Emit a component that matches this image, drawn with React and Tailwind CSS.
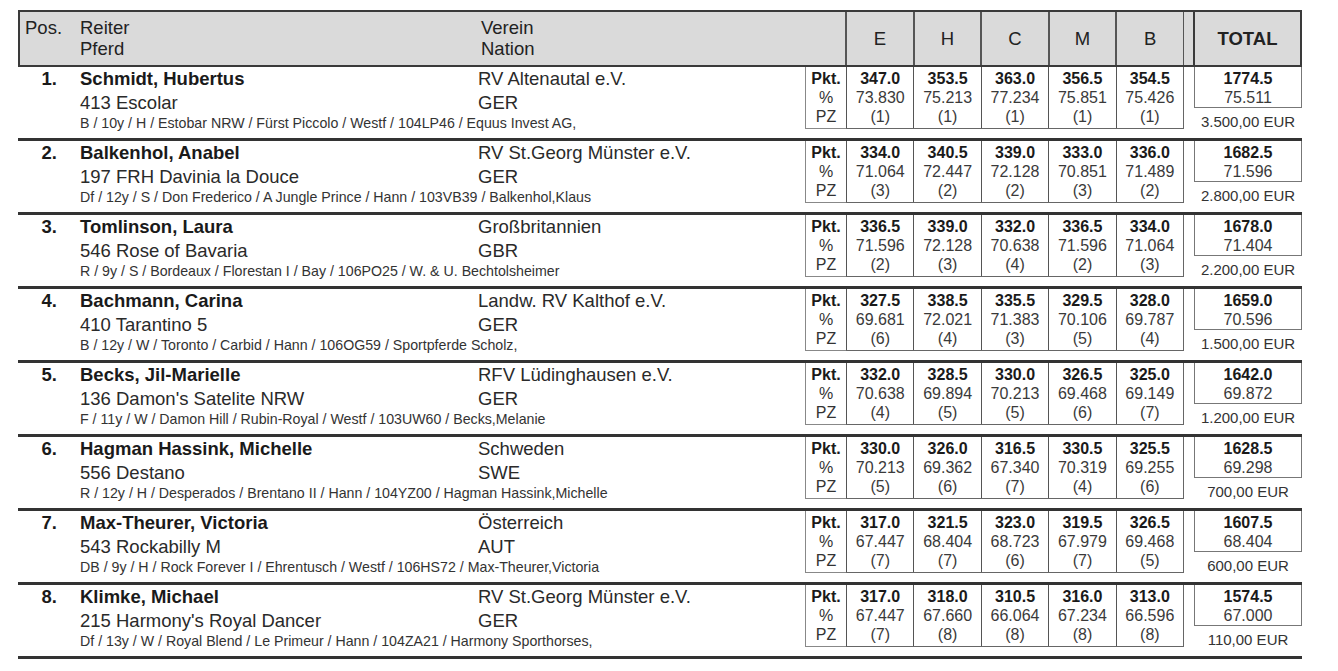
const results = [
  {
    pos: '1.', rider: 'Schmidt, Hubertus', horse: '413 Escolar', club: 'RV Altenautal e.V.', nation: 'GER',
    info: 'B / 10y / H / Estobar NRW / Fürst Piccolo / Westf / 104LP46 / Equus Invest AG,',
    scores: [['347.0', '73.830', '1'], ['353.5', '75.213', '1'], ['363.0', '77.234', '1'], ['356.5', '75.851', '1'], ['354.5', '75.426', '1']],
    total: '1774.5', percent: '75.511', prize: '3.500,00 EUR',
  },
  {
    pos: '2.', rider: 'Balkenhol, Anabel', horse: '197 FRH Davinia la Douce', club: 'RV St.Georg Münster e.V.', nation: 'GER',
    info: 'Df / 12y / S / Don Frederico / A Jungle Prince / Hann / 103VB39 / Balkenhol,Klaus',
    scores: [['334.0', '71.064', '3'], ['340.5', '72.447', '2'], ['339.0', '72.128', '2'], ['333.0', '70.851', '3'], ['336.0', '71.489', '2']],
    total: '1682.5', percent: '71.596', prize: '2.800,00 EUR',
  },
  {
    pos: '3.', rider: 'Tomlinson, Laura', horse: '546 Rose of Bavaria', club: 'Großbritannien', nation: 'GBR',
    info: 'R / 9y / S / Bordeaux / Florestan I / Bay / 106PO25 / W. & U. Bechtolsheimer',
    scores: [['336.5', '71.596', '2'], ['339.0', '72.128', '3'], ['332.0', '70.638', '4'], ['336.5', '71.596', '2'], ['334.0', '71.064', '3']],
    total: '1678.0', percent: '71.404', prize: '2.200,00 EUR',
  },
  {
    pos: '4.', rider: 'Bachmann, Carina', horse: '410 Tarantino 5', club: 'Landw. RV Kalthof e.V.', nation: 'GER',
    info: 'B / 12y / W / Toronto / Carbid / Hann / 106OG59 / Sportpferde Scholz,',
    scores: [['327.5', '69.681', '6'], ['338.5', '72.021', '4'], ['335.5', '71.383', '3'], ['329.5', '70.106', '5'], ['328.0', '69.787', '4']],
    total: '1659.0', percent: '70.596', prize: '1.500,00 EUR',
  },
  {
    pos: '5.', rider: 'Becks, Jil-Marielle', horse: "136 Damon's Satelite NRW", club: 'RFV Lüdinghausen e.V.', nation: 'GER',
    info: 'F / 11y / W / Damon Hill / Rubin-Royal / Westf / 103UW60 / Becks,Melanie',
    scores: [['332.0', '70.638', '4'], ['328.5', '69.894', '5'], ['330.0', '70.213', '5'], ['326.5', '69.468', '6'], ['325.0', '69.149', '7']],
    total: '1642.0', percent: '69.872', prize: '1.200,00 EUR',
  },
  {
    pos: '6.', rider: 'Hagman Hassink, Michelle', horse: '556 Destano', club: 'Schweden', nation: 'SWE',
    info: 'R / 12y / H / Desperados / Brentano II / Hann / 104YZ00 / Hagman Hassink,Michelle',
    scores: [['330.0', '70.213', '5'], ['326.0', '69.362', '6'], ['316.5', '67.340', '7'], ['330.5', '70.319', '4'], ['325.5', '69.255', '6']],
    total: '1628.5', percent: '69.298', prize: '700,00 EUR',
  },
  {
    pos: '7.', rider: 'Max-Theurer, Victoria', horse: '543 Rockabilly M', club: 'Österreich', nation: 'AUT',
    info: 'DB / 9y / H / Rock Forever I / Ehrentusch / Westf / 106HS72 / Max-Theurer,Victoria',
    scores: [['317.0', '67.447', '7'], ['321.5', '68.404', '7'], ['323.0', '68.723', '6'], ['319.5', '67.979', '7'], ['326.5', '69.468', '5']],
    total: '1607.5', percent: '68.404', prize: '600,00 EUR',
  },
  {
    pos: '8.', rider: 'Klimke, Michael', horse: "215 Harmony's Royal Dancer", club: 'RV St.Georg Münster e.V.', nation: 'GER',
    info: 'Df / 13y / W / Royal Blend / Le Primeur / Hann / 104ZA21 / Harmony Sporthorses,',
    scores: [['317.0', '67.447', '7'], ['318.0', '67.660', '8'], ['310.5', '66.064', '8'], ['316.0', '67.234', '8'], ['313.0', '66.596', '8']],
    total: '1574.5', percent: '67.000', prize: '110,00 EUR',
  },
]

const judges = ['E', 'H', 'C', 'M', 'B']

const Header = () => (
  <div className="flex h-[57px] border-2 border-[#3a3a3a] bg-[#dadada] text-[18.5px] text-[#222]">
    <div className="flex w-[825px] pt-[5px] leading-[21px]">
      <div className="w-[60px] pl-[5px]">Pos.</div>
      <div className="w-[398px]">
        <div>Reiter</div>
        <div>Pferd</div>
      </div>
      <div className="pl-[3px]">
        <div>Verein</div>
        <div>Nation</div>
      </div>
    </div>
    <div className="flex w-[338px]">
      {judges.map((j) => (
        <div key={j} className="flex flex-1 items-center justify-center border-l-2 border-[#555]">
          {j}
        </div>
      ))}
    </div>
    <div className="w-[10px] border-l border-[#555]" />
    <div className="flex flex-1 items-center justify-center border-l-2 border-[#3a3a3a] font-bold">
      TOTAL
    </div>
  </div>
)

const ResultRow = ({ r }) => (
  <div className="flex h-[74px] border-b-[3px] border-[#333]">
    <div className="w-[62px] pr-[23px] text-right text-[18.5px] font-bold leading-[24px] text-[#1a1a1a]">
      {r.pos}
    </div>
    <div className="w-[725px] text-[18.5px] leading-[24px] text-[#2a2a2a]">
      <div className="flex">
        <div className="w-[398px] font-bold text-[#1a1a1a]">{r.rider}</div>
        <div>{r.club}</div>
      </div>
      <div className="flex">
        <div className="w-[398px]">{r.horse}</div>
        <div>{r.nation}</div>
      </div>
      <div className="whitespace-nowrap text-[14.2px] leading-[16px] text-[#333]">{r.info}</div>
    </div>
    <div className="h-[62px] w-[41px] border-b border-l border-[#888] pt-[2px] text-center text-[16px] leading-[19px] text-[#333]">
      <div className="font-bold text-[#1a1a1a]">Pkt.</div>
      <div>%</div>
      <div>PZ</div>
    </div>
    <div className="flex h-[62px] w-[338px] border-r border-b border-[#666]">
      {r.scores.map((s, i) => (
        <div key={i} className="flex-1 border-l-[1.5px] border-[#555] pt-[2px] text-center text-[16px] leading-[19px] text-[#3a3a3a]">
          <div className="font-bold text-[#1a1a1a]">{s[0]}</div>
          <div>{s[1]}</div>
          <div>({s[2]})</div>
        </div>
      ))}
    </div>
    <div className="w-[10px]" />
    <div className="flex-1">
      <div className="h-[41px] border-x border-b border-[#777] pt-[2px] text-center text-[16px] leading-[19px] text-[#3a3a3a]">
        <div className="font-bold text-[#1a1a1a]">{r.total}</div>
        <div>{r.percent}</div>
      </div>
      <div className="pt-[4px] text-center text-[15px] leading-[20px] text-[#333]">{r.prize}</div>
    </div>
  </div>
)

export default function App() {
  return (
    <div className="min-h-screen bg-white pt-[10px] pl-[18px] font-['Liberation_Sans',Arial,sans-serif]">
      <div className="w-[1284px]">
        <Header />
        {results.map((r) => (
          <ResultRow key={r.pos} r={r} />
        ))}
      </div>
    </div>
  )
}
